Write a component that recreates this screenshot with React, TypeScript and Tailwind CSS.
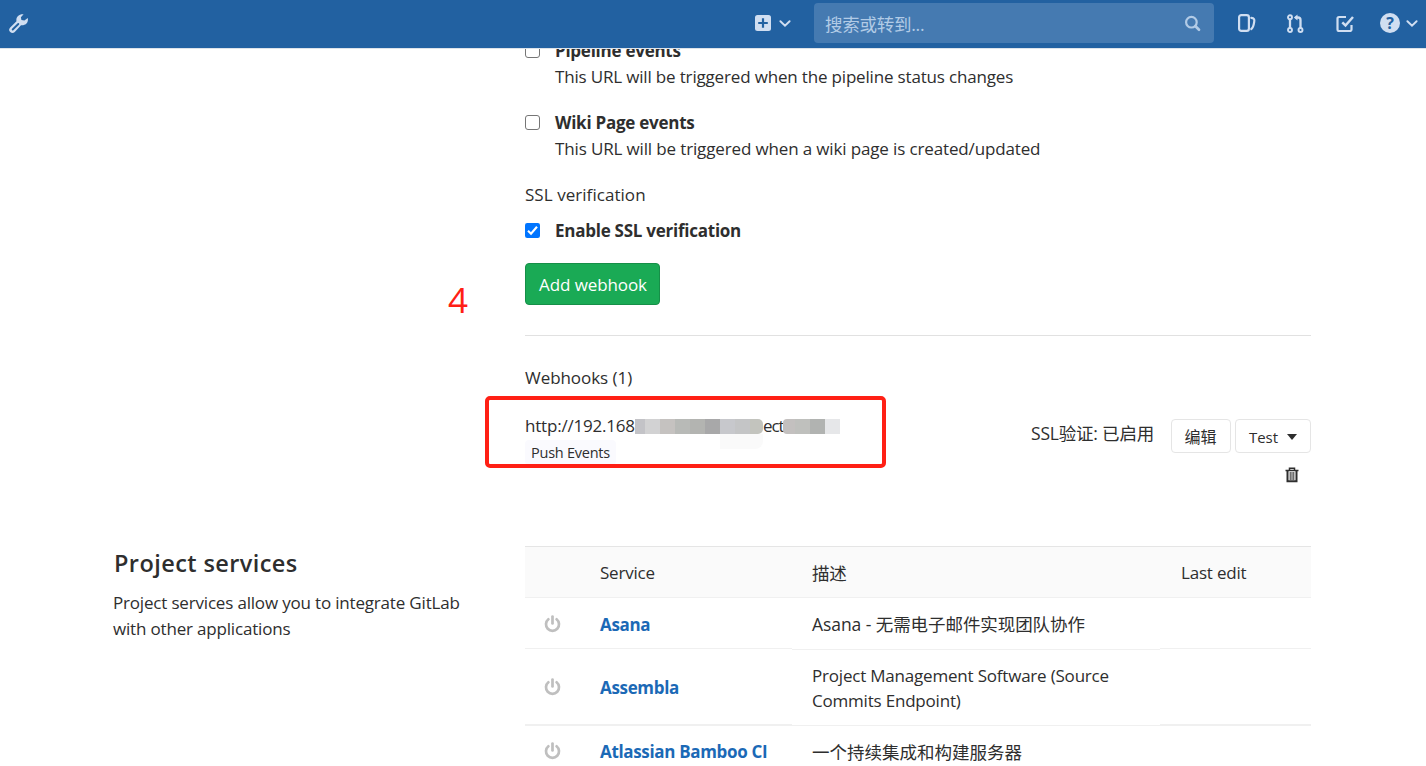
import { ReactNode } from 'react'

const events = [
  { title: 'Pipeline events', text: 'This URL will be triggered when the pipeline status changes', textClass: 'tracking-[-0.17px]' },
  { title: 'Wiki Page events', text: 'This URL will be triggered when a wiki page is created/updated', textClass: 'tracking-[-0.14px]' },
]

const services = [
  {
    name: 'Asana',
    description: 'Asana - 无需电子邮件实现团队协作',
    rowClass: 'h-[51px]',
    cellClass: 'border-b pt-[4px]',
    descriptionClass: '-mb-px pt-[2px] text-[17.5px] tracking-[-0.07px]',
  },
  {
    name: 'Assembla',
    description: 'Project Management Software (Source Commits Endpoint)',
    rowClass: 'h-[77px]',
    cellClass: 'border-b-2 pt-[2px]',
    descriptionClass: 'pt-[2px] tracking-[-0.2px]',
  },
  {
    name: 'Atlassian Bamboo CI',
    description: '一个持续集成和构建服务器',
    rowClass: 'h-[51px]',
    cellClass: 'border-b pt-[2px]',
    descriptionClass: '-mb-px pt-[2px] text-[17.5px]',
  },
]

function Chevron() {
  return (
    <svg className="h-[7px] w-[12px] text-[#d0def1]" viewBox="0 0 12 7" fill="none" stroke="currentColor" strokeWidth="1.9" strokeLinecap="round">
      <path d="M1.4 1.2 6 5.6l4.6-4.4" />
    </svg>
  )
}

function Checkbox({ checked = false }: { checked?: boolean }) {
  if (checked) {
    return (
      <svg className="mt-[5px] h-[15px] w-[15px] shrink-0" viewBox="0 0 15 15">
        <rect width="15" height="15" rx="2.2" fill="#0075ff" />
        <path d="M3 7.8 6 10.7l6-7" fill="none" stroke="#fff" strokeWidth="2.1" />
      </svg>
    )
  }
  return <span className="mt-[5px] h-[15px] w-[15px] shrink-0 rounded-[3px] border border-[#767676] bg-white" />
}

function PowerIcon() {
  return (
    <svg className="-mt-[2px] h-[18px] w-[17px] text-[#bfbfbf]" viewBox="0 0 17 18" fill="none" stroke="currentColor" strokeWidth="2.7">
      <path d="M4.4 4.3a6.5 6.5 0 1 0 8.2 0" strokeLinecap="round" />
      <path d="M8.5 1.6v6.8" strokeLinecap="round" />
    </svg>
  )
}

function Navbar() {
  return (
    <header className="relative z-10 flex h-[49px] items-center justify-between border-b border-[#dde3ea] bg-[#2261a1] bg-clip-padding pr-[8px] pb-[2px] pl-[8px] text-[#d0def1]">
      <svg className="h-[21px] w-[21px]" viewBox="0 0 21 21">
        <path d="M2.2 19a3.3 3.3 0 0 1 0-4.6l6.3-6.1C7.6 4 11 .6 15.6 1.2l-2.7 3 .5 2.9 3 .5 3.4-2.6c.9 5-2.6 7.8-6.8 7.2L6.8 19a3.3 3.3 0 0 1-4.6 0z" fill="currentColor" />
        <path d="m4.7 16.5 5.6-5.5" stroke="#2261a1" strokeWidth="1.9" strokeLinecap="round" />
      </svg>
      <div className="flex items-center">
        <svg className="h-[16px] w-[16px]" viewBox="0 0 16 16">
          <rect width="16" height="16" rx="2.5" fill="currentColor" />
          <path d="M8 3.2v9.6M3.2 8h9.6" stroke="#2261a1" strokeWidth="2.2" />
        </svg>
        <span className="ml-[8px]"><Chevron /></span>
        <div className="ml-[23px] flex h-[40px] w-[400px] items-center justify-between rounded-[4px] bg-[#457ab1] pr-[13px] pl-[11px] text-[17.5px] text-[#b2cbe6]">
          <span className="pt-[2px] tracking-[-0.25px]">搜索或转到...</span>
          <svg className="h-[17px] w-[17px]" viewBox="0 0 17 17" fill="none" stroke="currentColor" strokeWidth="2.2">
            <circle cx="7.4" cy="7.2" r="5.3" />
            <path d="m11.5 11.3 3.5 3.5" strokeWidth="2.7" strokeLinecap="round" />
          </svg>
        </div>
        <svg className="ml-[24px] h-[18px] w-[18px]" viewBox="0 0 18 18" fill="none" stroke="currentColor" strokeWidth="2.2">
          <rect x="1.1" y="1.1" width="9.8" height="15.8" rx="2.2" />
          <path d="M13.3 3.8c2.800.4 3.400 1.600 2.900 4-.4 2.700-.9 5.800-2.900 7.200" strokeLinecap="round" />
        </svg>
        <svg className="ml-[31px] h-[19px] w-[17px]" viewBox="0 0 17 19" fill="none" stroke="currentColor" strokeWidth="1.9">
          <circle cx="3" cy="3.3" r="2" />
          <circle cx="3" cy="16" r="2" />
          <circle cx="13.5" cy="16" r="2" />
          <path d="M3 5.3V14M13.5 14V6A2.5 2.5 0 0 0 11 3.5H8.5" strokeWidth="2.3" />
          <path d="M10.5 .5v6L6.8 3.5z" fill="currentColor" stroke="none" />
        </svg>
        <svg className="ml-[32px] h-[17px] w-[18px]" viewBox="0 0 18 17" fill="none" stroke="currentColor" strokeWidth="2.2">
          <path d="M10 2H3a1.5 1.5 0 0 0-1.5 1.5v11A1.5 1.5 0 0 0 3 16h11a1.5 1.5 0 0 0 1.5-1.5V10" />
          <path d="m6.3 7.3 3.2 3.2L17 2" strokeWidth="2.5" />
        </svg>
        <span className="ml-[26px] flex h-[20px] w-[20px] items-center justify-center rounded-full bg-[#d0def1] text-[16px] leading-none font-bold text-[#2261a1]">?</span>
        <span className="ml-[6px]"><Chevron /></span>
      </div>
    </header>
  )
}

function ActionButton({ className, children }: { className: string; children: ReactNode }) {
  return (
    <button className={`flex h-[34px] items-center justify-center rounded-[4px] border border-[#e5e5e5] bg-white pt-[2px] ${className}`}>
      {children}
    </button>
  )
}

function HookUrl() {
  return (
    <div className="relative flex items-center font-medium whitespace-nowrap">
      <span className="w-[110px] tracking-[-0.2px]">http://192.168</span>
      <span className="flex h-[15px]">
        <i className="w-[10px] bg-[#c3c3c7]" />
        <i className="w-[15px] bg-[#d2d2d3]" />
        <i className="w-[15px] bg-[#c5c2c0]" />
        <i className="w-[15px] bg-[#b8bab7]" />
        <i className="w-[15px] bg-[#b3b4b1]" />
        <i className="w-[15px] bg-[#a8a8a9]" />
        <i className="w-[15px] bg-[#c7c8cc]" />
        <i className="w-[15px] bg-[#c4c5c6]" />
        <i className="w-[13px] rounded-r-[5px] bg-[#c3c4be]" />
      </span>
      <span className="w-[20px] tracking-[-1.1px]">ect</span>
      <span className="flex h-[15px]">
        <i className="w-[12px] rounded-l-[4px] bg-[#c3c0bf]" />
        <i className="w-[15px] bg-[#bfc0bd]" />
        <i className="w-[15px] bg-[#b1b3b1]" />
        <i className="w-[15px] bg-[#e6e7e9]" />
      </span>
      <i className="absolute top-[21px] left-[195px] h-[15px] w-[43px] rounded-br-[8px] bg-[#fafafa]" />
    </div>
  )
}

function HookSettings() {
  return (
    <section className="ml-[525px] w-[786px]">
      {events.map((event) => (
        <div key={event.title} className="mb-[20px] flex gap-[15px]">
          <Checkbox />
          <div className="whitespace-nowrap">
            <div className="font-bold tracking-[-0.25px]"><span>{event.title}</span></div>
            <div className={event.textClass}><span>{event.text}</span></div>
          </div>
        </div>
      ))}
      <div className="font-medium tracking-[0.05px]"><span>SSL verification</span></div>
      <div className="mt-[10px] flex gap-[15px]">
        <Checkbox checked />
        <span className="font-bold tracking-[-0.25px]">Enable SSL verification</span>
      </div>
      <button className="mt-[19px] flex h-[42px] w-[135px] items-center justify-center rounded-[4px] border border-[#168f48] bg-[#1aaa55] pt-px pl-px tracking-[-0.1px] whitespace-nowrap text-white">
        Add webhook
      </button>
      <hr className="mt-[30px] border-[#e1e1e1]" />
      <div className="mt-[29px] font-medium tracking-[-0.05px]"><span>Webhooks (1)</span></div>
      <div className="mt-[22px] flex h-[110px] items-start justify-between">
        <div>
          <HookUrl />
          <div className="mt-px flex h-[25px] w-[91px] items-center justify-center rounded-[4px] bg-[#fafafe] text-[14.5px] tracking-[-0.25px] whitespace-nowrap">
            <span>Push Events</span>
          </div>
        </div>
        <div className="flex w-[290px] flex-wrap items-start justify-end pt-[6px]">
          <span className="mt-px mr-[17px] text-[17.5px] tracking-[-0.2px] whitespace-nowrap">SSL验证: 已启用</span>
          <ActionButton className="w-[60px] pr-px text-[16px]">编辑</ActionButton>
          <ActionButton className="ml-[4px] w-[76px] gap-[9px] text-[15px] tracking-[-0.1px]">
            <span>Test</span>
            <svg className="h-[6px] w-[10px]" viewBox="0 0 10 6"><path d="M0 0h10L5 6z" fill="#2e2e2e" /></svg>
          </ActionButton>
          <svg className="mt-[14px] mr-[12px] h-[16px] w-[14px]" viewBox="0 0 14 16" fill="none" stroke="#2e2e2e">
            <path d="M.5 3.5h13M4.5 3V1.3h5V3" strokeWidth="1.5" />
            <path d="M2.5 4v10.2h9V4" strokeWidth="2" />
            <path d="M5.2 5v8M7 5v8M8.8 5v8" strokeWidth="1" />
          </svg>
        </div>
      </div>
    </section>
  )
}

function ProjectServices() {
  return (
    <section className="mt-[23px] flex">
      <div className="w-[525px] pl-[113px]">
        <h4 className="mt-[3px] pl-px text-[23.5px] leading-[28px] font-semibold tracking-[0.42px]"><span>Project services</span></h4>
        <p className="mt-[13px] tracking-[-0.18px] whitespace-nowrap">
          <span>Project services allow you to integrate GitLab</span>
          <br />
          <span>with other applications</span>
        </p>
      </div>
      <div className="w-[786px]">
        <div className="flex h-[52px] items-center border-y border-t-[#e5e5e5] border-b-[#f0f0f0] bg-[#fafafa] pt-[2px] tracking-[-0.2px]">
          <span className="ml-[75px] w-[212px]">Service</span>
          <span className="w-[369px] text-[17.5px]">描述</span>
          <span>Last edit</span>
        </div>
        {services.map((service) => (
          <div key={service.name} className={`flex ${service.rowClass}`}>
            <div className={`flex w-[267px] items-center border-[#f0f0f0] ${service.cellClass}`}>
              <div className="w-[75px] pl-[19px]"><PowerIcon /></div>
              <div className="font-bold tracking-[-0.33px] whitespace-nowrap text-[#1b69b6]"><span>{service.name}</span></div>
            </div>
            <div className={`flex w-[368px] items-center border-b border-[#f0f0f0] pr-[30px] pl-[20px] leading-[25px] ${service.descriptionClass}`}>
              <span>{service.description}</span>
            </div>
            <div className={`flex-1 border-[#f0f0f0] ${service.cellClass}`} />
          </div>
        ))}
      </div>
    </section>
  )
}

export default function App() {
  return (
    <div className="relative h-[766px] w-[1426px] overflow-hidden bg-white font-['Open_Sans','Noto_Sans_CJK_SC',sans-serif] text-[17px] leading-[26px] text-[#2e2e2e]">
      <Navbar />
      <main className="-mt-[11px]">
        <HookSettings />
        <ProjectServices />
      </main>
      {/* step marker and highlight over the saved hook */}
      <span className="absolute top-[279px] left-[448px] text-[35px] leading-[42px] text-[#ff2015]">4</span>
      <div className="absolute top-[396px] left-[485px] h-[72px] w-[401px] rounded-[5px] border-4 border-[#ff2015]" />
    </div>
  )
}
